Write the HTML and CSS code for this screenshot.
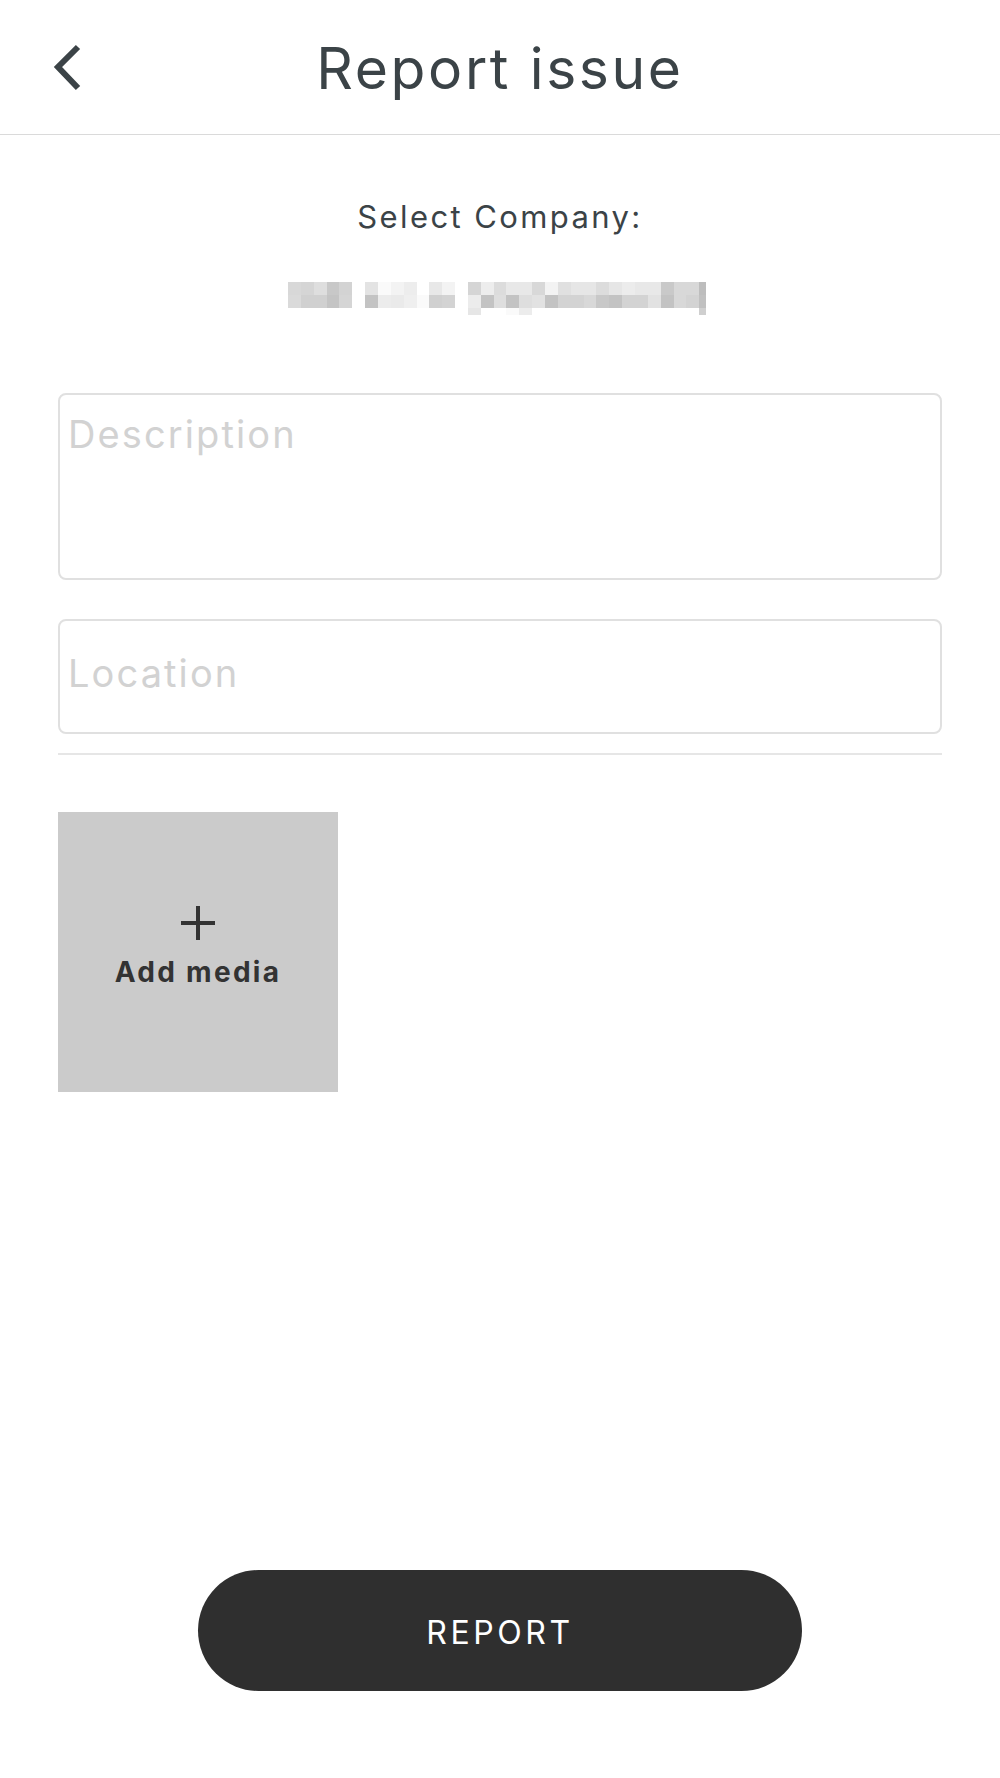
FILE: index.html
```html
<!DOCTYPE html>
<html lang="en">
<head>
<meta charset="utf-8">
<title>Report issue</title>
<link rel="stylesheet" href="styles.css">
</head>
<body>
<div class="page">
  <header class="header">
    <button class="back" aria-label="Back">
      <svg width="34" height="52" viewBox="0 0 34 52"><path d="M28 5 L8 25 L28 46" fill="none" stroke="#3b4347" stroke-width="6" stroke-linejoin="miter"/></svg>
    </button>
    <h1 class="title">Report issue</h1>
    <div class="spacer"></div>
  </header>

  <main class="content">
    <p class="select-label">Select Company:</p>
    <div class="company-name" aria-label="Company name (hidden)">
      <div class="px-row r1"></div>
      <div class="px-row r2"></div>
      <div class="px-row r3"></div>
    </div>

    <div class="field field-desc"><span class="placeholder">Description</span></div>
    <div class="field field-loc"><span class="placeholder">Location</span></div>
    <div class="divider"></div>

    <div class="media-tile">
      <svg class="plus" width="34" height="34" viewBox="0 0 34 34"><path d="M17 0 V34 M0 17 H34" stroke="#333" stroke-width="4"/></svg>
      <span class="media-label">Add media</span>
    </div>
  </main>

  <div class="footer">
    <button class="report-btn">REPORT</button>
  </div>
</div>
</body>
</html>
```

FILE: styles.css
```css
* { box-sizing: border-box; }
html, body { margin: 0; padding: 0; background: #fff; }
body { font-family: Inter, "Noto Sans", sans-serif; color: #3b4347; }

.page {
  width: 1000px;
  height: 1778px;
  display: flex;
  flex-direction: column;
}

.header {
  height: 135px;
  border-bottom: 1px solid #dadada;
  display: grid;
  grid-template-columns: 1fr auto 1fr;
  align-items: start;
}
.back {
  justify-self: start;
  margin: 42px 0 0 50px;
  padding: 0;
  border: 0;
  background: none;
  width: 34px;
  height: 52px;
}
.back svg { display: block; }
.title {
  margin: 40px 0 0;
  font-size: 57px;
  line-height: 57px;
  font-weight: 400;
  letter-spacing: 2.6px;
  color: #3b4347;
}

.content {
  padding: 0 58px;
  display: flex;
  flex-direction: column;
}

.select-label {
  margin: 66px 0 0;
  text-align: center;
  font-size: 31px;
  line-height: 31px;
  letter-spacing: 2.4px;
  color: #3b4347;
}

.company-name {
  margin: 50px 0 0 calc(50% - 212px);
  width: 418px;
  height: 33px;
  display: flex;
  flex-direction: column;
}
.px-row { width: 418px; }
.r1 { height: 13px;
  background: linear-gradient(to right,
    #d8d8d8 0 13px, #d5d5d5 13px 26px, #dedede 26px 39px, #c8c8c8 39px 51px, #d3d3d3 51px 64px,
    #fff 64px 77px, #e3e3e3 77px 90px, #fafafa 90px 103px, #f3f3f3 103px 116px, #ededed 116px 129px,
    #fff 129px 141px, #e8e8e8 141px 154px, #f3f3f3 154px 167px, #fff 167px 180px,
    #d5d5d5 180px 193px, #ededed 193px 206px, #dcdcdc 206px 218px, #e8e8e8 218px 244px,
    #d8d8d8 244px 257px, #f3f3f3 257px 270px, #e0e0e0 270px 283px, #e6e6e6 283px 308px,
    #dcdcdc 308px 321px, #e6e6e6 321px 334px, #ececec 334px 347px, #e8e8e8 347px 373px,
    #c9c9c9 373px 386px, #d8d8d8 386px 411px, #bdbdbd 411px 418px);
}
.r2 { height: 13px;
  background: linear-gradient(to right,
    #dadada 0 13px, #d0d0d0 13px 39px, #c4c4c4 39px 51px, #d5d5d5 51px 64px,
    #fff 64px 77px, #c3c3c3 77px 90px, #ececec 90px 103px, #eaeaea 103px 116px, #efefef 116px 129px,
    #fafafa 129px 141px, #d0d0d0 141px 154px, #d3d3d3 154px 167px, #fff 167px 180px,
    #ececec 180px 193px, #c3c3c3 193px 206px, #dedede 206px 218px, #c3c3c3 218px 231px,
    #dedede 231px 244px, #e2e2e2 244px 257px, #c3c3c3 257px 270px, #d3d3d3 270px 296px,
    #d8d8d8 296px 308px, #c8c8c8 308px 321px, #c3c3c3 321px 334px, #d3d3d3 334px 360px,
    #e2e2e2 360px 373px, #c3c3c3 373px 386px, #d8d8d8 386px 398px, #d3d3d3 398px 411px,
    #c0c0c0 411px 418px);
}
.r3 { height: 7px;
  background: linear-gradient(to right,
    #fff 0 180px, #e6e6e6 180px 193px, #fff 193px 218px, #fafafa 218px 231px,
    #ececec 231px 244px, #fff 244px 411px, #cfcfcf 411px 418px);
}

.field {
  border: 2px solid #e0e0e0;
  border-radius: 8px;
  padding-left: 8px;
}
.placeholder {
  display: block;
  font-size: 38px;
  line-height: 38px;
  letter-spacing: 2.1px;
  color: #d2d2d2;
}
.field-desc {
  margin-top: 78px;
  height: 187px;
  padding-top: 20px;
}
.field-loc {
  margin-top: 39px;
  height: 115px;
  padding-top: 33px;
}
.divider {
  margin-top: 19px;
  height: 2px;
  background: #e6e6e6;
}

.media-tile {
  margin-top: 57px;
  width: 280px;
  height: 280px;
  background: #cbcbcb;
  display: flex;
  flex-direction: column;
  align-items: center;
  padding-top: 94px;
}
.plus { display: block; }
.media-label {
  margin-top: 18px;
  font-size: 28px;
  line-height: 28px;
  font-weight: 700;
  letter-spacing: 2.3px;
  color: #333;
}

.footer {
  margin-top: auto;
  padding-bottom: 87px;
  display: flex;
  justify-content: center;
}
.report-btn {
  width: 604px;
  height: 121px;
  border: 0;
  border-radius: 61px;
  background: #2f2f2f;
  color: #fff;
  font-family: Inter, "Noto Sans", sans-serif;
  font-size: 32px;
  letter-spacing: 3.6px;
  padding: 4px 0 0;
}
```
